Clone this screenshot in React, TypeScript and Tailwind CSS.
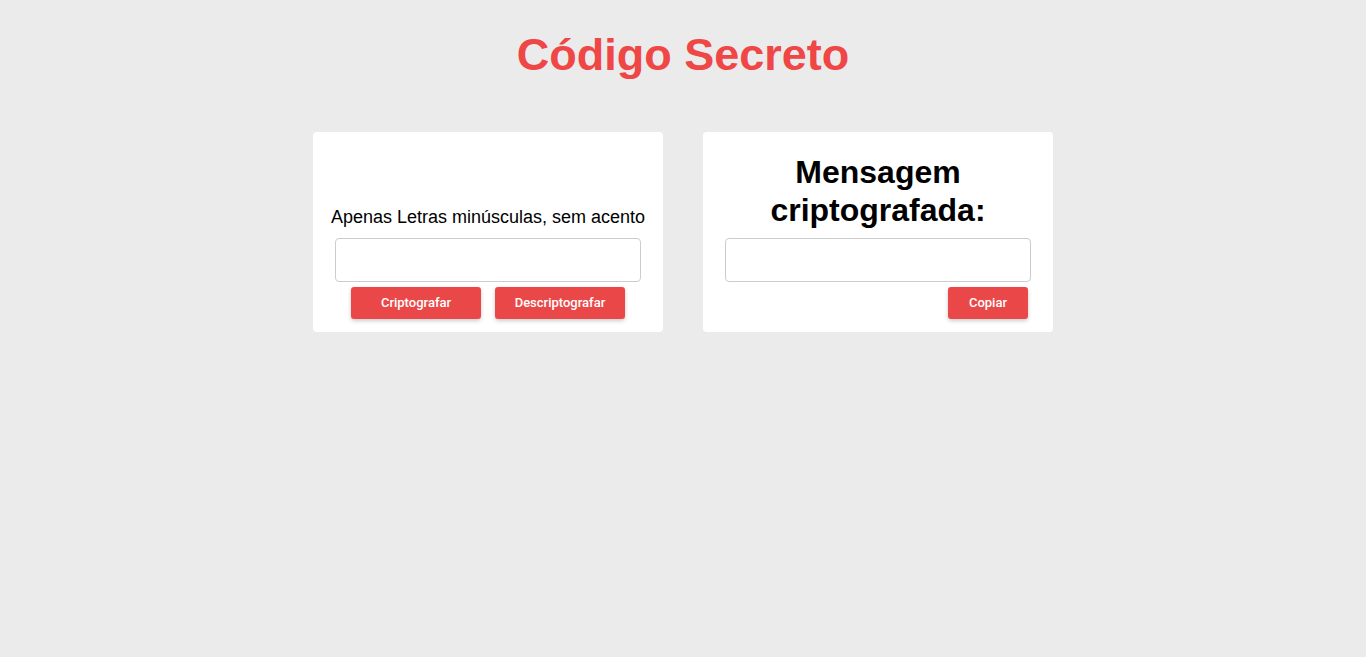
import React from "react";

const btn =
  "h-[32px] bg-[#ea4848] text-white text-[13px] font-medium rounded-[3px] shadow-[0_2px_4px_rgba(0,0,0,0.2)]";

export default function App() {
  return (
    <div
      className="min-h-[657px] w-full bg-[#ebebeb] flex flex-col items-center"
      style={{ fontFamily: '"Liberation Sans", Arial, sans-serif' }}
    >
      <h1 className="mt-[29px] text-[45px] leading-[52px] font-bold text-[#ef4646]">
        Código Secreto
      </h1>
      <div className="mt-[51px] flex gap-[40px]">
        <div className="w-[350px] h-[200px] bg-white rounded-[4px] flex flex-col items-center justify-end px-[22px] pb-[13px]">
          <p className="text-[18px] leading-[21px] text-black whitespace-nowrap">
            Apenas Letras minúsculas, sem acento
          </p>
          <input
            type="text"
            className="mt-[10px] w-full h-[44px] border border-[#cccccc] rounded-[4px] bg-white outline-none"
          />
          <div className="mt-[5px] flex gap-[14px]" style={{ fontFamily: "Roboto, Arial, sans-serif" }}>
            <button className={`w-[130px] ${btn}`}>Criptografar</button>
            <button className={`w-[130px] ${btn}`}>Descriptografar</button>
          </div>
        </div>
        <div className="w-[350px] h-[200px] bg-white rounded-[4px] flex flex-col items-center justify-end px-[22px] pb-[13px]">
          <h2 className="text-[32px] leading-[38px] font-bold text-black text-center">
            Mensagem
            <br />
            criptografada:
          </h2>
          <input
            type="text"
            className="mt-[9px] w-full h-[44px] border border-[#cccccc] rounded-[4px] bg-white outline-none"
          />
          <div className="mt-[5px] w-full flex justify-end pr-[3px]" style={{ fontFamily: "Roboto, Arial, sans-serif" }}>
            <button className={`w-[80px] ${btn}`}>Copiar</button>
          </div>
        </div>
      </div>
    </div>
  );
}
